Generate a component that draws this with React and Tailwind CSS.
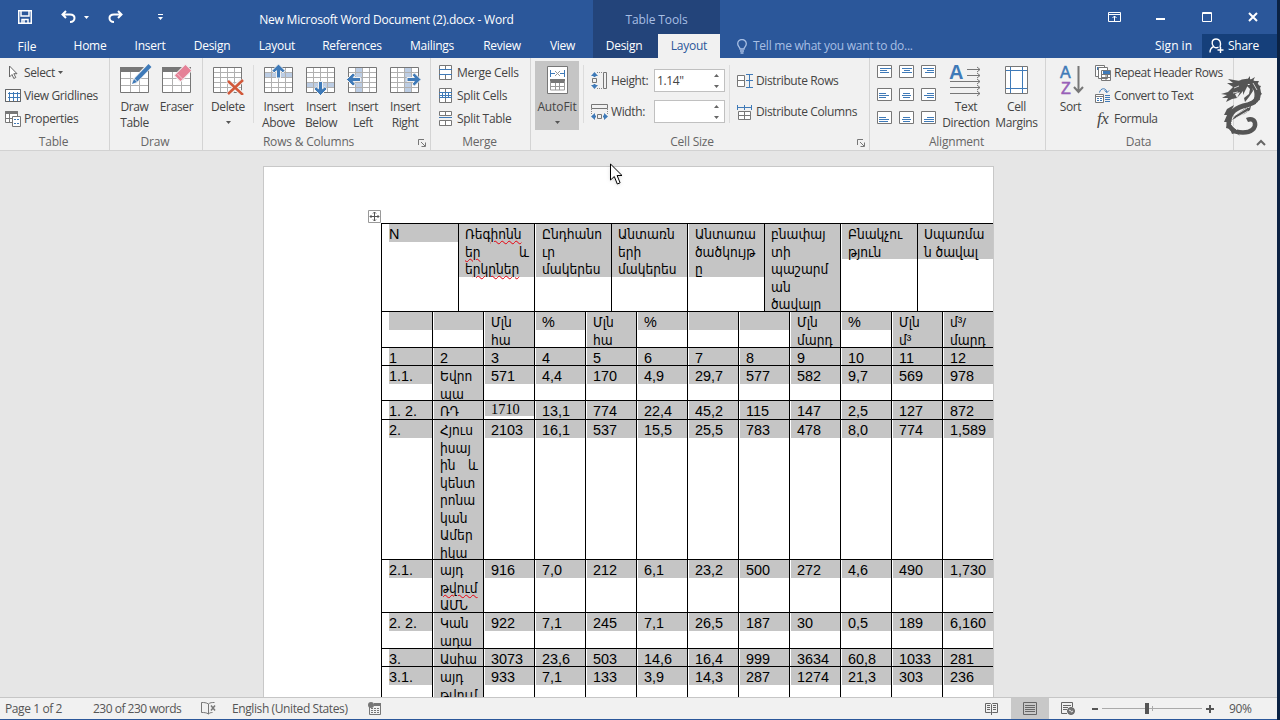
const tabs = [
  { label: "Home", width: "w-[56px]" },
  { label: "Insert", width: "w-[64px]" },
  { label: "Design", width: "w-[60px]" },
  { label: "Layout", width: "w-[70px]" },
  { label: "References", width: "w-[80px]" },
  { label: "Mailings", width: "w-[80px]" },
  { label: "Review", width: "w-[60px]" },
  { label: "View", width: "w-[61px]" },
];

// every cell is a list of lines, the selection shade follows the lines
const headCells = [
  { width: "w-[77px]", lines: ["N"] },
  { width: "w-[76px]", flush: true, lines: [["Ռեգ", "իոնն"], ["", "եր", "և"], ["ե", "րկրներ"]] },
  { width: "w-[77px]", lines: ["Ընդհանո", "ւր", "մակերես"] },
  { width: "w-[76px]", flush: true, lines: ["Անտառն", "երի", "մակերես"] },
  { width: "w-[77px]", lines: ["Անտառա", "ծածկույթ", "ը"] },
  { width: "w-[76px]", flush: true, lines: ["բնափայ", "տի", "պաշարմ", "ան", "ծավալը"] },
  { width: "w-[77px]", lines: ["Բնակչու", "թյուն"] },
  { width: "w-[76px]", flush: true, lines: ["Սպառմա", "ն ծավալ"] },
];

const rows = [
  { height: "h-[36px]", cells: ["", "", ["Մլն", "հա"], "%", ["Մլն", "հա"], "%", "", "", ["Մլն", "մարդ"], "%", ["Մլն", "մ³"], ["մ³/", "մարդ"]] },
  { height: "h-[18px]", cells: ["1", "2", "3", "4", "5", "6", "7", "8", "9", "10", "11", "12"] },
  { height: "h-[35px]", cells: ["1.1.", ["Եվրո", "պա"], "571", "4,4", "170", "4,9", "29,7", "577", "582", "9,7", "569", "978"] },
  { height: "h-[19px]", cells: ["1. 2.", "ՌԴ", "1710", "13,1", "774", "22,4", "45,2", "115", "147", "2,5", "127", "872"] },
  { height: "h-[140px]", cells: ["2.", ["Հյուս", "իսայ", ["ին", "", "և"], "կենտ", "րոնա", "կան", "Ամեր", "իկա"], "2103", "16,1", "537", "15,5", "25,5", "783", "478", "8,0", "774", "1,589"] },
  { height: "h-[53px]", cells: ["2.1.", ["այդ", ["", "թվում"], "ԱՄՆ"], "916", "7,0", "212", "6,1", "23,2", "500", "272", "4,6", "490", "1,730"] },
  { height: "h-[36px]", cells: ["2. 2.", ["Կան", "ադա"], "922", "7,1", "245", "7,1", "26,5", "187", "30", "0,5", "189", "6,160"] },
  { height: "h-[18px]", cells: ["3.", "Ասիա", "3073", "23,6", "503", "14,6", "16,4", "999", "3634", "60,8", "1033", "281"] },
  { height: "h-[60px]", cells: ["3.1.", ["այդ", ["", "թվում"]], "933", "7,1", "133", "3,9", "14,3", "287", "1274", "21,3", "303", "236"] },
];

const Line = ({ line }) => {
  if (typeof line === "string") {
    const serif = line === "1710";
    const armenian = /[\u0530-\u058f]/.test(line);
    return (
      <div
        className={
          serif
            ? "h-[15px] leading-[17px] font-['Liberation_Serif',serif]"
            : armenian
            ? "h-[17.55px] text-[13.6px] leading-[22px]"
            : "h-[17.55px] leading-[20px]"
        }
      >
        {line}
      </div>
    );
  }
  // [plain, misspelled, pushed to the right edge]
  return (
    <div className="h-[17.55px] text-[13.6px] leading-[22px] flex justify-between pr-[5px]">
      <span>
        {line[0]}
        <span className={line[1] ? "underline decoration-wavy decoration-red-600 decoration-1 underline-offset-1" : ""}>{line[1]}</span>
      </span>
      <span>{line[2]}</span>
    </div>
  );
};

const Cell = ({ lines, width, first, flush }) => (
  <div className={`${width} shrink-0 border-l border-black overflow-hidden h-full`}>
    <div className={`bg-[#c5c5c5] ${first ? "ml-[7px]" : flush ? "pl-[6px]" : "ml-px pl-[6px]"}`}>
      {lines.map((line, i) => (
        <Line key={i} line={line === "" ? "\u00a0" : line} />
      ))}
    </div>
  </div>
);

const Group = ({ label, width, launcher, children }) => (
  <div className={`${width} shrink-0 h-full flex flex-col border-r border-[#d4d4d4] border-solid`}>
    <div className="h-[75px] shrink-0 pt-[3px] flex">{children}</div>
    <div className={`flex items-center justify-center text-[#666] h-[17px] shrink-0 pt-px tracking-[-0.2px] relative ${launcher ? "pr-[16px]" : "pr-[2px]"}`}>
      {label}
      {launcher && (
        <svg className="absolute right-[3px] top-[6px]" width="9" height="9" fill="none" stroke="#777">
          <path d="M.5 6V.5H6M3 3l4 4M7.5 3.5v4h-4" />
        </svg>
      )}
    </div>
  </div>
);

const BigButton = ({ icon, lines, width, arrow, active }) => (
  <div className={`${width} shrink-0 flex flex-col items-center ${active ? "bg-[#c5c5c5] h-[69px]" : ""}`}>
    <div className="h-[38px] flex items-start pt-[2px]">{icon}</div>
    {lines.map((l) => (
      <div key={l} className="h-4 leading-4">{l}</div>
    ))}
    {arrow && <Arrow className="mt-[6px]" />}
  </div>
);

const SmallButton = ({ icon, children }) => (
  <div className="h-[23px] flex items-center">
    <div className="w-[19px] shrink-0 flex">{icon}</div>
    {children}
  </div>
);

const Arrow = ({ className = "" }) => (
  <svg className={className} width="5" height="3" fill="#555"><path d="M0 0h5L2.5 3z" /></svg>
);

const InnerLine = () => <div className="w-px h-[58px] mt-[4px] bg-[#dcdcdc] shrink-0" />;

const BigGrid = ({ children, head, band }) => (
  <svg width="34" height="32" viewBox="0 0 34 32" fill="none">
    <path fill="#fff" d="M2.5 4.5h28v25h-28z" />
    {band}
    <path stroke="#b0b0b0" d={head ? "M12.5 9v20M21.5 9v20M3 15.5h27M3 22.5h27" : "M9.5 5v24M16.5 5v24M23.5 5v24M3 9.5h27M3 14.5h27M3 19.5h27M3 24.5h27"} />
    <path stroke="#777" d="M2.5 4.5h28v25h-28z" />
    {head && <path fill="#777" d="M2 4h29v5H2z" />}
    {children}
  </svg>
);

const UpArrow = ({ transform }) => (
  <path transform={transform} fill="#3f7ab8" stroke="#f1f1f1" strokeWidth="1" d="M0-7.500L6.500-1 4.500 1.500 2-.8V6.500h-4V-.8L-4.500 1.500-6.500-1z" />
);

const SmallGrid = ({ d, blue }) => (
  <svg width="16" height="16" fill="none">
    <path fill="#fff" stroke="#777" d={d} />
    <path stroke="#3f7ab8" d={blue} />
  </svg>
);

const alignPaths = [
  ["M3 3.5h11M3 5.5h7M3 7.5h9", "M3 3.5h10M5 5.5h6M3 7.5h10", "M2 3.5h11M6 5.5h7M4 7.5h9"],
  ["M2 5.5h7M2 7.5h10M2 9.5h7", "M4 5.5h7M3 7.5h9M4 9.5h7", "M6 5.5h7M3 7.5h10M6 9.5h7"],
  ["M2 6.5h7M2 8.5h10M2 10.5h9", "M4 6.5h7M3 8.5h9M4 10.5h7", "M6 6.5h7M3 8.5h10M3 10.5h10"],
];

const Spinner = ({ value }) => (
  <div className="w-[71px] h-[23px] border border-[#c0c0c0] bg-white flex items-center justify-between pl-[2px] pr-[5px]">
    <span>{value}</span>
    <svg width="5" height="14" fill="#666"><path d="M0 3h5L2.500 0zM0 11h5l-2.500 3z" /></svg>
  </div>
);

const TitleBar = () => (
  <div className="h-[34px] flex text-white">
    <div className="w-[180px] shrink-0 flex items-center pl-[18px]">
      <svg width="14" height="14" fill="none" stroke="#fff" strokeWidth="1.500">
        <path d="M.75.75h12.500v12.500H.75zM3 1v5h8V1M4 13V9.500h6V13M6 10v3" />
      </svg>
      <svg className="ml-[29px]" width="15" height="14" fill="none" stroke="#fff" strokeWidth="2">
        <path d="M5 1L1.500 4.500 5 8M2 4.500h7c3 0 4.500 1.500 4.500 3.500S12 12 9 12" />
      </svg>
      <svg className="ml-[8px]" width="5" height="3" fill="#fff"><path d="M0 0h5L2.500 3z" /></svg>
      <svg className="ml-[19px]" width="15" height="14" fill="none" stroke="#fff" strokeWidth="2">
        <path d="M10 1l3.500 3.500L10 8M13 4.500H6C3 4.500 1.500 6 1.500 8S3 12 6 12" />
      </svg>
      <svg className="ml-[35px]" width="5" height="6" fill="#fff"><path d="M0 0h5v1H0zM0 3h5L2.500 6z" /></svg>
    </div>
    <div className="w-[413px] shrink-0 flex items-center justify-center pt-[5px] tracking-[-0.22px]">
      New Microsoft Word Document (2).docx - Word
    </div>
    <div className="w-[127px] shrink-0 bg-[#23447a] flex items-center justify-center pt-[5px] tracking-[-0.1px] text-[#a8bfe4]">
      <span>Table Tools</span>
    </div>
    <div className="flex-1 flex items-center justify-end pr-[19px]">
      <svg width="13" height="10" fill="none" stroke="#fff">
        <path d="M.5.5h12v9H.5zM1 2.500h11M6.500 9V4M4.500 6l2-2 2 2" />
      </svg>
      <svg className="ml-[35px]" width="9" height="10"><path fill="#fff" d="M0 6h9v2H0z" /></svg>
      <svg className="ml-[37px]" width="10" height="10" fill="none" stroke="#fff"><path d="M.5.5h9v9h-9zM0 1.500h10" /></svg>
      <svg className="ml-[36px]" width="10" height="10" stroke="#fff" strokeWidth="2"><path d="M1 1l8 8M9 1L1 9" /></svg>
    </div>
  </div>
);

const TabBar = () => (
  <div className="h-6 flex text-white leading-6 tracking-[-0.25px]">
    <div className="w-[54px] shrink-0 text-center mr-2 pt-px tracking-normal">File</div>
    {tabs.map((t) => (
      <div key={t.label} className={`${t.width} shrink-0 text-center`}>{t.label}</div>
    ))}
    <div className="w-[65px] shrink-0 text-center pr-[3px] bg-[#23447a]">Design</div>
    <div className="w-[62px] shrink-0 text-center bg-[#f1f1f1] text-[#2b579a]">Layout</div>
    <div className="flex items-center text-[#a8bfe4] pl-[17px] flex-1">
      <svg className="mr-[6px]" width="10" height="15" fill="none" stroke="#a8bfe4" strokeWidth="1.300">
        <path d="M3 10C3 8 .7 7.500.7 4.800a4.300 4.300 0 018.600 0C9.300 7.500 7 8 7 10zM3 12h4M3.500 14h3" />
      </svg>
      Tell me what you want to do...
    </div>
    <div className="mr-[10px] tracking-normal">Sign in</div>
    <div className="w-[75px] bg-[#153f7a] flex items-center pl-[7px]">
      <svg className="mr-[4px]" width="15" height="16" fill="none" stroke="#fff" strokeWidth="1.400">
        <path d="M11 9.500C12.500 5 11 1 7 1S2 5 4.500 8.500c-2 1-3.500 3-3.500 6M5 9c1.500 1 3 1 4.500 0M11.500 9v6M8.500 12h6" />
      </svg>
      Share
    </div>
  </div>
);

const Ribbon = () => (
  <div className="h-[93px] bg-[#f1f1f1] border-b border-[#d2d2d2] flex relative text-[#444] whitespace-nowrap tracking-[-0.38px]">
    <Group label="Table" width="w-[110px]">
      <div className="pl-[5px]">
        <SmallButton icon={<svg width="13" height="15" fill="#fff" stroke="#666"><path d="M4.500 1v11l2.500-2.500 1.800 4 2-1-2-3.800h3.200z" /></svg>}>
          Select <Arrow className="ml-[3px]" />
        </SmallButton>
        <SmallButton icon={<svg width="16" height="14" fill="none"><path fill="#fff" stroke="#3f7ab8" d="M.5.5h15v12H.5zM4.500 3v9M8.500 3v9M12.500 3v9M3 4.500h12M3 8.500h12" /><path stroke="#666" d="M.5.5h15v12H.5z" /></svg>}>
          View Gridlines
        </SmallButton>
        <SmallButton icon={<svg width="16" height="16" fill="none" stroke="#777"><path fill="#fff" d="M.5.5h12v11H.5zM4.500 3v8M.5 7.500h12" /><path fill="#777" d="M.5.500h12v2H.5z" /><path fill="#fff" d="M7.500 5.500h8v10h-8z" /><path stroke="#3f7ab8" d="M9 8.500h2M9 12.500h2M12 8.500h2M12 12.500h2" /></svg>}>
          Properties
        </SmallButton>
      </div>
    </Group>
    <Group label="Draw" width="w-[93px]">
      <BigButton width="w-[49px]" lines={["Draw", "Table"]} icon={
        <BigGrid head><path stroke="#f1f1f1" strokeWidth="6" d="M15 20L31 3" /><path stroke="#3f7ab8" strokeWidth="4" d="M18 17L32 2.500" /><path fill="#3f7ab8" d="M14 21l2-5 3 3z" /></BigGrid>
      } />
      <BigButton width="w-[35px]" lines={["Eraser"]} icon={
        <BigGrid head><rect x="-8" y="-4.500" width="16" height="9" rx="1" transform="translate(23 10) rotate(-45)" fill="#e58197" stroke="#f1f1f1" /><path stroke="#f5c6d0" d="M17.500 11l6 6" /></BigGrid>
      } />
    </Group>
    <Group label="Rows & Columns" width="w-[228px]" launcher>
      <BigButton width="w-[50px]" lines={["Delete"]} arrow icon={
        <BigGrid><path stroke="#f1f1f1" strokeWidth="5" d="M17 18l14 13M31 17L17 32" /><path stroke="#d1583a" strokeWidth="2.500" d="M17 18l15 14M32 17L17 31" /></BigGrid>
      } />
      <InnerLine />
      <BigButton width="w-[49px]" lines={["Insert", "Above"]} icon={<BigGrid band={<path fill="#bccde4" d="M3 9h27v6H3z" />}><UpArrow transform="translate(16.500 8.500)" /></BigGrid>} />
      <BigButton width="w-[36px]" lines={["Insert", "Below"]} icon={<BigGrid band={<path fill="#bccde4" d="M3 19h27v6H3z" />}><UpArrow transform="translate(16.500 25) rotate(180)" /></BigGrid>} />
      <BigButton width="w-[48px]" lines={["Insert", "Left"]} icon={<BigGrid band={<path fill="#bccde4" d="M9 5h7v24H9z" />}><UpArrow transform="translate(8 16.500) rotate(-90)" /></BigGrid>} />
      <BigButton width="w-[36px]" lines={["Insert", "Right"]} icon={<BigGrid band={<path fill="#bccde4" d="M16 5h7v24h-7z" />}><UpArrow transform="translate(25.500 16.500) rotate(90)" /></BigGrid>} />
    </Group>
    <Group label="Merge" width="w-[100px]">
      <div className="pl-[7px] tracking-[-0.3px]">
        <SmallButton icon={<SmallGrid d="M1.500.5h12v14h-12zM7.500 1v4M7.500 10v4" blue="M1 4.500h13M1 9.500h13" />}>Merge Cells</SmallButton>
        <SmallButton icon={<SmallGrid d="M1.500.5h12v14h-12zM7.500 1v14" blue="M1 4.500h13M1 9.500h13M4.500 5v5M7.500 5v5M10.500 5v5M1 7.500h13" />}>Split Cells</SmallButton>
        <SmallButton icon={<SmallGrid d="M1.500.5h12v4h-12zM1.500 9.500h12v5h-12zM7.500 0v4M7.500 10v5" blue="M1 6.500h13" />}>Split Table</SmallButton>
      </div>
    </Group>
    <Group label="Cell Size" width="w-[339px]" launcher>
      <div className="pl-[4px] flex tracking-[-0.1px]">
        <BigButton active arrow width="w-[44px]" lines={["AutoFit"]} icon={
          <svg className="mt-[2px]" width="23" height="30" fill="none"><path fill="#fff" stroke="#777" d="M1.500 1.500h20v27h-20z" /><path fill="#777" d="M4 14h15v4H4z" /><path stroke="#999" d="M4.500 16v9h14v-9M9.500 18v7M13.500 18v7M4 21.500h15M9 6l5 5M14 6l-5 5" /><path stroke="#3f7ab8" d="M4.500 5v7M18.500 5v7M5 8.500h4M14 8.500h4" /></svg>
        } />
      </div>
      <div className="w-[4px]" />
      <InnerLine />
      <div className="w-[145px] shrink-0 pl-[7px] pt-[8px]">
        <div className="h-[23px] flex items-center mb-2">
          <svg className="mr-[3px]" width="17" height="17" fill="none"><path stroke="#777" d="M12.500.5h3v16h-3z" /><path stroke="#777" d="M1.500 6.500h4v4h-4z" /><path fill="#3f7ab8" d="M0 4l3.500-4L7 4H4.500v1h-2V4zM0 13l3.500 4L7 13H4.500v-1h-2v1z" /><path stroke="#888" strokeDasharray="1 1" d="M6 .5h5M6 16.500h5" /></svg>
          <span className="w-[43px]">Height:</span>
          <Spinner value={'1.14"'} />
        </div>
        <div className="h-[23px] flex items-center">
          <svg className="mr-[3px]" width="17" height="17" fill="none"><path stroke="#777" d="M.5 1.500h16v4H.5z" /><path stroke="#777" d="M6.500 11.500h4v4h-4z" /><path fill="#3f7ab8" d="M4 10l-4 3.500L4 17v-2.500h1v-2H4zM13 10l4 3.500-4 3.500v-2.500h-1v-2h1z" /><path stroke="#888" strokeDasharray="1 1" d="M.5 6v5M16.500 6v5" /></svg>
          <span className="w-[43px]">Width:</span>
          <Spinner value="" />
        </div>
      </div>
      <InnerLine />
      <div className="pl-[7px] pt-[8px]">
        <div className="h-[23px] mb-2 flex items-center">
          <svg className="mr-[3px]" width="16" height="16" fill="none"><path fill="#fff" stroke="#777" d="M.5 2.500h7v11h-7zM0 7.500h8" /><path stroke="#3f7ab8" d="M9 1.500h7M9 7.500h7M9 14.500h7M12.500 2v12" /></svg>
          Distribute Rows
        </div>
        <div className="h-[23px] flex items-center">
          <svg className="mr-[3px]" width="16" height="16" fill="none"><path fill="#fff" stroke="#777" d="M1.500 7.500h12v8h-12zM7.500 8v7M1 11.500h12" /><path stroke="#3f7ab8" d="M0 3.500h15M.5 1v5M7.500 1v5M14.500 1v5" /></svg>
          Distribute Columns
        </div>
      </div>
    </Group>
    <Group label="Alignment" width="w-[176px]">
      <div className="pl-[7px] pt-[4px] grid grid-cols-[repeat(3,22px)] grid-rows-[repeat(3,23px)] shrink-0">
        {alignPaths.flat().map((d, i) => (
          <svg key={i} width="15" height="13" fill="none">
            <path fill="#fff" stroke="#777" d="M.5.500h14v12H.5z" />
            <path stroke="#3f7ab8" d={d} />
          </svg>
        ))}
      </div>
      <BigButton width="w-[46px]" lines={["Text", "Direction"]} icon={
        <svg className="overflow-visible" width="32" height="34" fill="none" stroke="#777"><text x="-1" y="16" fontSize="20" fontWeight="700" fill="#3f7ab8" stroke="none" className="font-['Liberation_Sans',sans-serif]">A</text><path d="M17 6.500h13M17 12.500h13M0 18.500h30M0 24.500h30M0 30.500h30M27 4l3 2.500L27 9M27 10l3 2.500-3 2.500M27 16l3 2.500-3 2.500M27 22l3 2.500-3 2.500M27 28l3 2.500-3 2.500" /></svg>
      } />
      <BigButton width="w-[55px]" lines={["Cell", "Margins"]} icon={
        <svg className="mt-[2px]" width="24" height="30" fill="none"><path fill="#fff" stroke="#777" d="M.5 1.500h22v27H.5z" /><path stroke="#3f7ab8" d="M5.500 2v26M17.500 2v26M1 5.500h21M1 23.500h21" /></svg>
      } />
    </Group>
    <Group label="Data" width="w-[188px]">
      <BigButton width="w-[49px]" lines={["Sort"]} icon={
        <svg className="overflow-visible font-['Liberation_Sans',sans-serif]" width="26" height="32"><text x="2" y="15" fontSize="16" stroke="#3f7ab8" strokeWidth=".5" fill="#3f7ab8">A</text><text x="3" y="31" fontSize="16" stroke="#9860b8" strokeWidth=".5" fill="#9860b8">Z</text><path fill="none" stroke="#777" strokeWidth="2" d="M20.500 3v26M16 24l4.500 5 4.500-5" /></svg>
      } />
      <div className="tracking-[-0.42px]">
        <SmallButton icon={<svg width="16" height="16" fill="#fff" stroke="#777"><path d="M.5.5h9v11h-9z" /><path fill="#3f7ab8" stroke="none" d="M2 2h6v3H2z" /><path d="M3.500 2.500h9v11h-9zM6.500 5.500h9v10h-9zM11 9v6M7 9.500h8M7 12.500h8" /><path fill="#3f7ab8" stroke="none" d="M8 6h7v3H8z" /></svg>}>Repeat Header Rows</SmallButton>
        <SmallButton icon={<svg width="16" height="15" fill="none"><path fill="#fff" stroke="#777" d="M.5 6.500h8v8h-8zM0 8.500h9" /><path stroke="#3f7ab8" d="M2 10.500h2M5 10.500h2M2 12.500h2M5 12.500h2M10 7.500h5M10 9.500h5M10 11.500h5M10 13.500h5M4.500 4.500c1-5 7-5 7.500 0M9.500 2.500l2.500 2 2-2" /></svg>}>Convert to Text</SmallButton>
        <SmallButton icon={<span className="font-['Liberation_Serif',serif] italic text-[17px] leading-4 pl-[2px]">fx</span>}>Formula</SmallButton>
      </div>
    </Group>
    <Dragon />
    <svg className="absolute left-[1256px] top-[81px]" width="10" height="7" fill="none" stroke="#666" strokeWidth="2"><path d="M1 6l4-4 4 4" /></svg>
  </div>
);

// watermark emblem that floats over the end of the ribbon
const Dragon = () => (
  <svg className="absolute left-[1220px] top-[18px]" width="44" height="62" viewBox="0 0 44 62" fill="none" stroke="#555">
    <path strokeWidth="5" d="M18 8C25 4 34 4 37.500 12c3 9-1 14-10 17C16 31 9 37 9 46" />
    <path strokeWidth="4.500" d="M9 42c-2 9 4 14.500 14 14.500 8 0 13-4 12-9.500-1-4-5-4.500-8-3" />
    <path fill="#555" stroke="none" d="M20 5L8 3l5 4-6 0 6 4-5 5-7 2 6 1-5 3 6 0-2 4 6-3 5-1-2-4 5-2-3 6 6-7 0 4 4-8 2-6zM26 9l4 4-1 5-5 4 1 4 4-5 4-6-1-6z" />
    <path fill="#555" stroke="none" d="M27 4l3-4 0 4 5-3-2 4 6 0-2 4 4 1-2 4 3 4-3 2 1 4-4 1 0 3-5 1-2 3-5 0c8-3 12-9 10-17zM31 28L13 41l2-1-3 4 13-7-2 2 7-5 1-4zM14 29l-7 4-3 6 3 0-3 7 3 0-1 6 4 1 2 5 4-1 4 3-9-10-2-10z" />
    <path stroke="#f1f1f1" strokeWidth=".8" d="M14 12l5-2M13 17l5-1M14 40l13-8M16 42l12-7M33 7l4 7M11 48l6 6" />
  </svg>
);

const StatusBar = () => (
  <div className="h-[23px] bg-[#f1f1f1] border-t border-[#c6c6c6] border-b-[#2b579a] border-b flex items-center text-[#555] whitespace-nowrap tracking-[-0.4px]">
    <div className="w-[93px] pl-[5px]">Page 1 of 2</div>
    <div className="w-[108px] tracking-[-0.5px]">230 of 230 words</div>
    <svg className="mr-[16px]" width="15" height="13" fill="none" stroke="#777"><path d="M7.500 2v10M7.500 2C5 .5 3 .5.5.500v10c2.500 0 5 0 7 1.500 1-1 2-1.500 4-1.500M7.500 2C9 .5 11 .5 13.500.500" /><path strokeWidth="1.500" d="M10 3.500l4 5M14 3.500l-4 5" /></svg>
    <div className="w-[136px]">English (United States)</div>
    <svg width="13" height="13" fill="none"><path stroke="#777" d="M1.500 4v8.500h11V3" /><path stroke="#777" strokeDasharray="2 1" d="M3 6.500h9M3 8.500h9M3 10.500h9" /><path fill="#777" d="M6 1h7v3H6z" /><circle cx="3" cy="3" r="3" fill="#777" /></svg>
    <div className="flex-1" />
    <svg className="mr-[13px]" width="13" height="12" fill="none" stroke="#666"><path d="M.5.500h5l1 1 1-1h5v9h-5l-1 1-1-1h-5zM6.500 2v10M2 2.500h3M2 4.500h3M2 6.500h3M8 2.500h3M8 4.500h3M8 6.500h3" /></svg>
    <div className="w-[38px] h-[21px] bg-[#c8c8c8] flex items-center justify-center mr-[12px]">
      <svg width="14" height="13" fill="none" stroke="#666"><path d="M.5.5h13v12H.5zM2 3.500h10M2 5.500h10M2 7.500h10M2 9.500h10" /></svg>
    </div>
    <svg className="mr-[17px]" width="14" height="13" fill="none" stroke="#666"><path d="M6 11.500H.5V.5h11V5M2 3.500h8M2 5.500h5M2 7.500h4" /><circle cx="10" cy="9" r="3.500" fill="#777" /><path stroke="#eee" d="M8 8l2 1M10 10l2-1" /></svg>
    <div className="w-[6px] h-[2px] bg-[#555]" />
    <div className="w-[100px] h-[11px] mx-[4px] flex items-center">
      <div className="w-[43px] h-px bg-[#aaa]" />
      <div className="w-[4px] h-[11px] bg-[#555]" />
      <div className="w-[3px] h-px bg-[#aaa]" />
      <div className="w-px h-[5px] bg-[#aaa]" />
      <div className="flex-1 h-px bg-[#aaa]" />
    </div>
    <svg width="8" height="8" stroke="#555" strokeWidth="2"><path d="M0 4h8M4 0v8" /></svg>
    <div className="w-[63px] pl-[15px]">90%</div>
  </div>
);

const Document = () => (
  <div className="flex-1 min-h-0 overflow-hidden bg-[#e6e6e6] pl-[263px] pt-[15px]">
    <div className="w-[731px] h-[600px] bg-white border border-[#c8c8c8] overflow-hidden pl-[104px] pt-[43px]">
      <svg width="13" height="13" fill="#fff" stroke="#555"><path stroke="#999" d="M.5.5h12v12H.5z" /><path d="M6.500 2v9M2 6.500h9M5 3.500l1.500-1.500L8 3.500M5 9.500L6.500 11 8 9.500M3.500 5L2 6.500 3.500 8M9.500 5L11 6.500 9.500 8" fill="none" /></svg>
      <div className="ml-[13px] w-[612px] overflow-hidden text-[14.4px] text-black font-['Liberation_Sans','DejaVu_Sans_Condensed','DejaVu_Sans',sans-serif] whitespace-nowrap">
        <div className="flex h-[88px] border-t border-black">
          {headCells.map((c, i) => (
            <Cell key={i} lines={c.lines} width={c.width} flush={c.flush} first={i === 0} />
          ))}
        </div>
        {rows.map((row, r) => (
          <div key={r} className={`flex ${row.height} border-t border-black`}>
            {row.cells.map((c, i) => (
              <Cell key={i} lines={Array.isArray(c) ? c : [c]} width="w-[51px]" first={i === 0} />
            ))}
          </div>
        ))}
      </div>
    </div>
  </div>
);

const App = () => {
  return (
    <div className="w-[1280px] h-[720px] overflow-hidden flex bg-[#0b2243] text-[12px] font-['Open_Sans','Noto_Sans',sans-serif] relative">
      <div className="w-[1277px] h-full flex flex-col bg-[#2b579a]">
        <TitleBar />
        <TabBar />
        <Ribbon />
        <Document />
        <StatusBar />
      </div>
      <svg className="absolute left-[610px] top-[163px] drop-shadow" width="14" height="22" fill="#fff" stroke="#000">
        <path d="M.5 1v16l3.800-3.500 3 7.500 2.800-1.200-3-7.300H12z" />
      </svg>
    </div>
  );
};

export default App;
